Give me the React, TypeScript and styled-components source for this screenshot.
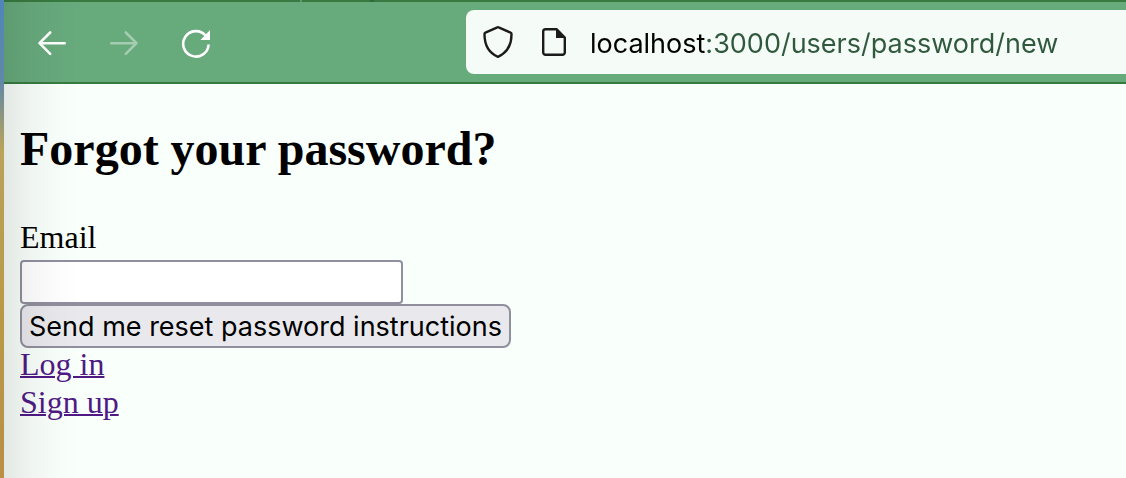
import React from "react";
import styled, { createGlobalStyle } from "styled-components";

const sans = `Inter, "Liberation Sans", sans-serif`;
const serif = `"Liberation Serif", "Times New Roman", serif`;

const GlobalStyle = createGlobalStyle`
  *, *::before, *::after { box-sizing: border-box; }
  body { margin: 0; }
`;

const Desktop = styled.div`
  display: flex;
  min-height: 100vh;
  padding-left: 4px;
  background: linear-gradient(180deg, #4f86b8 0, #5f87a8 80px, #b9a25a 150px, #b99a48 300px, #b98f45 100%);
`;

const BrowserWindow = styled.div`
  position: relative;
  flex: 1;
  min-width: 0;
  display: flex;
  flex-direction: column;
  background: #f9fffb;
`;

const EdgeShadow = styled.div`
  position: absolute;
  inset: 0 auto 0 0;
  width: 76px;
  pointer-events: none;
  background: linear-gradient(90deg, rgba(0, 0, 0, 0.09) 0, rgba(0, 0, 0, 0.04) 28px, rgba(0, 0, 0, 0.01) 54px, transparent 100%);
`;

/* bottom edge of the tab strip, with the separator of the last tab */
const TabStripEdge = styled.div`
  height: 2px;
  background: linear-gradient(90deg, #387a40 296px, #5a9a66 296px, #5a9a66 298px, #387a40 298px, #387a40 366px, #2f6a37 366px, #2f6a37 370px, #387a40 370px);
`;

const Toolbar = styled.header`
  display: flex;
  align-items: center;
  padding: 8px 0;
  background: #67aa7c;
  border-bottom: 2px solid #387a40;
`;

const NavButtons = styled.nav`
  display: flex;
  flex: none;
  gap: 40px;
  width: 462px;
  padding-left: 32px;
`;

const IconButton = styled.button`
  display: flex;
  padding: 0;
  border: 0;
  background: none;
  color: #ffffff;

  &:disabled { color: #a3ccb0; }
`;

const AddressBar = styled.label`
  display: flex;
  flex: 1;
  align-items: center;
  min-width: 0;
  height: 64px;
  padding-left: 16px;
  gap: 20px;
  background: #f5fbf7;
  border-radius: 8px 0 0 8px;
`;

const AddressIcons = styled.span`
  display: flex;
  align-items: center;
  gap: 24px;
`;

const AddressInput = styled.input`
  flex: 1;
  min-width: 0;
  height: 44px;
  padding: 2px 0 0;
  border: 0;
  outline: 0;
  font: 27px/40px ${sans};
  color: #30583c;
  background: linear-gradient(90deg, #000000 117px, #30583c 117px);
  background-clip: text;
  -webkit-text-fill-color: transparent;
`;

const Page = styled.main`
  padding: 37px 16px;
  font: 32px/32px ${serif};
  color: #000000;
`;

const Title = styled.h2`
  margin: 0 0 44px;
  font-size: 48px;
  line-height: 56px;
`;

const Form = styled.form`
  display: flex;
  flex-direction: column;
  align-items: flex-start;
`;

const FieldLabel = styled.label`
  margin-bottom: 7px;
`;

const TextField = styled.input`
  width: 383px;
  max-width: 100%;
  height: 44px;
  padding: 2px 8px;
  border: 2px solid #8f8f9d;
  border-radius: 4px;
  background: #ffffff;
  font: 27px/32px ${sans};
`;

const SubmitButton = styled.button`
  height: 44px;
  padding: 2px 7px 0;
  border: 2px solid #8f8f9d;
  border-radius: 8px;
  background: #e9e9ed;
  color: #000000;
  font: 27px/32px ${sans};
  white-space: nowrap;
`;

const Links = styled.div`
  display: flex;
  flex-direction: column;
  align-items: flex-start;
  gap: 6px;
`;

const PageLink = styled.a`
  color: #4f1a84;
  text-decoration: underline;
  text-decoration-thickness: 2px;
`;

const Icon = ({ children }: { children: React.ReactNode }) => (
  <svg width="32" height="32" viewBox="0 0 32 32" fill="none" stroke="currentColor" strokeWidth="2.6" strokeLinecap="round" strokeLinejoin="round" aria-hidden="true">
    {children}
  </svg>
);

export default function App() {
  return (
    <Desktop>
      <GlobalStyle />
      <BrowserWindow>
        <TabStripEdge />
        <Toolbar>
          <NavButtons aria-label="Browser navigation">
            <IconButton type="button" aria-label="Back">
              <Icon><path d="M28.700 17.200H3.500M14.200 6.500L3.500 17.200l10.700 10.700" /></Icon>
            </IconButton>
            <IconButton type="button" aria-label="Forward" disabled>
              <Icon><path d="M3.300 17.200h25.200M17.800 6.500l10.700 10.700-10.700 10.700" /></Icon>
            </IconButton>
            <IconButton type="button" aria-label="Reload">
              <Icon>
                <path d="M28.600 18.500A12.700 12.700 0 1 1 25.500 9.500" strokeLinecap="butt" />
                <path d="M30 4v10H20.500z" fill="currentColor" stroke="none" />
              </Icon>
            </IconButton>
          </NavButtons>
          <AddressBar>
            <AddressIcons>
              <svg width="32" height="36" viewBox="0 0 32 36" fill="none" stroke="#1b1b1b" strokeWidth="2.4" strokeLinejoin="round" aria-hidden="true">
                <path d="M16 3.2Q16.600 3.200 17.200 3.600L28.600 8.600Q29.600 9 29.500 10.200C29.500 20 26 28.500 16 32.800C6 28.500 2.500 20 2.500 10.200Q2.400 9 3.400 8.600L14.800 3.600Q15.400 3.200 16 3.200Z" />
              </svg>
              <svg width="32" height="32" viewBox="0 0 32 32" fill="none" stroke="#1b1b1b" strokeWidth="2.4" strokeLinejoin="round" aria-hidden="true">
                <path d="M7.500 3.200h11l8.300 8.300v15a2.300 2.300 0 0 1-2.300 2.300h-17a2.300 2.300 0 0 1-2.300-2.300V5.500a2.300 2.300 0 0 1 2.300-2.300z" />
                <path d="M18 3v9h9z" fill="#1b1b1b" stroke="none" />
              </svg>
            </AddressIcons>
            <AddressInput aria-label="Address" defaultValue="localhost:3000/users/password/new" spellCheck={false} />
          </AddressBar>
        </Toolbar>
        <Page>
          <Title>Forgot your password?</Title>
          <Form onSubmit={(e) => e.preventDefault()}>
            <FieldLabel htmlFor="email">Email</FieldLabel>
            <TextField id="email" type="email" />
            <SubmitButton type="submit">Send me reset password instructions</SubmitButton>
          </Form>
          <Links>
            <PageLink href="#login">Log in</PageLink>
            <PageLink href="#signup">Sign up</PageLink>
          </Links>
        </Page>
        <EdgeShadow />
      </BrowserWindow>
    </Desktop>
  );
}
